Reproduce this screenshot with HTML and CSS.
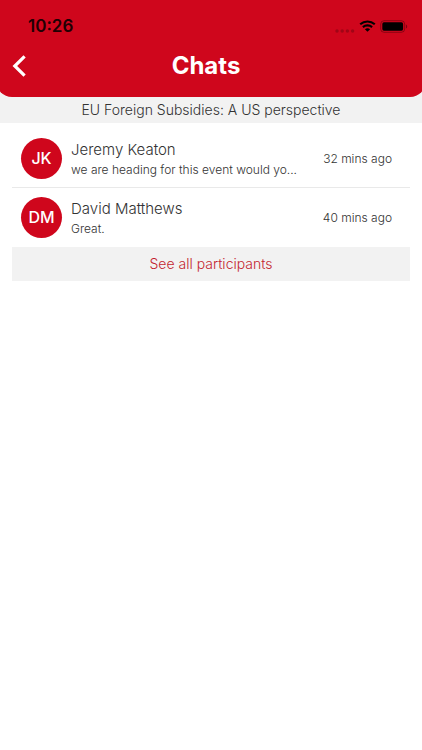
FILE: index.html
```html
<!DOCTYPE html>
<html lang="en">
<head>
<meta charset="utf-8">
<meta name="viewport" content="width=device-width, initial-scale=1">
<title>Chats</title>
<link rel="stylesheet" href="styles.css">
</head>
<body>
<div class="top">
  <header class="header">
    <div class="status">
      <time class="clock">10:26</time>
      <div class="indicators">
        <svg class="signal" width="20" height="4" viewBox="0 0 20 4" aria-hidden="true"><circle cx="2" cy="2" r="1.7"/><circle cx="7.2" cy="2" r="1.7"/><circle cx="12.4" cy="2" r="1.7"/><circle cx="17.6" cy="2" r="1.7"/></svg>
        <svg width="17" height="12" viewBox="0 0 17 12" aria-hidden="true"><path d="M1.2 4.3C5.4 .5 11.6 .5 15.8 4.3M3.9 7.1c2.6-2.3 6.6-2.3 9.2 0" fill="none" stroke="#000" stroke-width="2.1"/><path d="M8.5 11.8 5.9 9.2c1.5-1.3 3.7-1.3 5.2 0z"/></svg>
        <svg width="28" height="13" viewBox="0 0 28 13" aria-hidden="true"><rect x=".7" y=".7" width="24" height="11.6" rx="3.4" fill="none" stroke="#000" stroke-opacity=".32"/><rect x="2.3" y="2.3" width="20.8" height="8.4" rx="1.6"/><path d="M26 4.5v4c1.6-.6 1.6-3.4 0-4z" fill-opacity=".4"/></svg>
      </div>
    </div>
    <div class="titlebar">
      <button class="back" type="button" aria-label="Back"><svg width="14" height="22" viewBox="0 0 14 22" aria-hidden="true"><path d="M12.6 1.4 2.8 11 12.6 20.6" fill="none" stroke="#fff" stroke-width="3.2"/></svg></button>
      <h1 class="title">Chats</h1>
    </div>
  </header>
  <h2 class="event">EU Foreign Subsidies: A US perspective</h2>
</div>
<main class="chats">
  <ul class="list">
    <li class="chat">
      <span class="avatar">JK</span>
      <div class="body">
        <h3 class="name">Jeremy Keaton</h3>
        <p class="message">we are heading for this event would yo...</p>
      </div>
      <time class="ago">32 mins ago</time>
    </li>
    <li class="chat">
      <span class="avatar">DM</span>
      <div class="body">
        <h3 class="name">David Matthews</h3>
        <p class="message">Great.</p>
      </div>
      <time class="ago">40 mins ago</time>
    </li>
  </ul>
  <button class="all" type="button">See all participants</button>
</main>
</body>
</html>
```
FILE: styles.css
```css
* { box-sizing: border-box; }
body, h1, h2, h3, p, ul { margin: 0; padding: 0; }
body {
  background: #fff;
  color: #333;
  font-family: Inter, "Liberation Sans", sans-serif;
  font-weight: 300;
  overflow-x: hidden;
}
button { border: 0; font: inherit; cursor: pointer; }
svg { display: block; }
.top { background: #f2f2f2; overflow: hidden; }
.header {
  margin: 0 -4px;
  padding: 14px 4px 16px;
  background: #cf061c;
  border-radius: 0 0 16px 16px;
}
.status {
  display: flex;
  align-items: center;
  justify-content: space-between;
  height: 24px;
  padding: 0 14px 0 28px;
}
.clock { color: #200003; font-size: 17px; font-weight: 600; }
.indicators { display: flex; align-items: center; gap: 4px; }
.signal { align-self: flex-end; fill: #a00516; }
.titlebar {
  display: grid;
  grid-template-columns: 48px 1fr 58px;
  align-items: center;
  height: 42px;
  padding-top: 14px;
  margin-bottom: 1px;
}
.back { padding: 0 12px; background: none; }
.title {
  color: #fff;
  font-size: 24px;
  line-height: 28px;
  font-weight: 700;
  text-align: center;
}
.event {
  font-size: 14px;
  line-height: 26px;
  font-weight: 300;
  text-align: center;
}
.chats { padding: 6px 12px; }
.list { list-style: none; }
.chat {
  display: flex;
  align-items: center;
  gap: 9px;
  height: 59px;
  padding: 0 18px 0 9px;
  border-bottom: 1px solid #e9e9e9;
}
.chat:last-child { border-color: transparent; }
.avatar {
  flex: none;
  width: 41px;
  height: 41px;
  border-radius: 50%;
  background: #cf061c;
  color: #fff;
  font-size: 16px;
  line-height: 41px;
  font-weight: 500;
  text-align: center;
}
.body { flex: 1; min-width: 0; padding-top: 3px; }
.name { font-size: 15px; line-height: 20px; font-weight: 300; }
.message {
  font-size: 12px;
  line-height: 20px;
  overflow: hidden;
  white-space: nowrap;
  text-overflow: ellipsis;
}
.ago { flex: none; font-size: 12px; }
.all {
  display: block;
  width: 100%;
  background: #f2f2f2;
  color: #c41f30;
  font-size: 14px;
  line-height: 34px;
  padding: 0;
}
```
